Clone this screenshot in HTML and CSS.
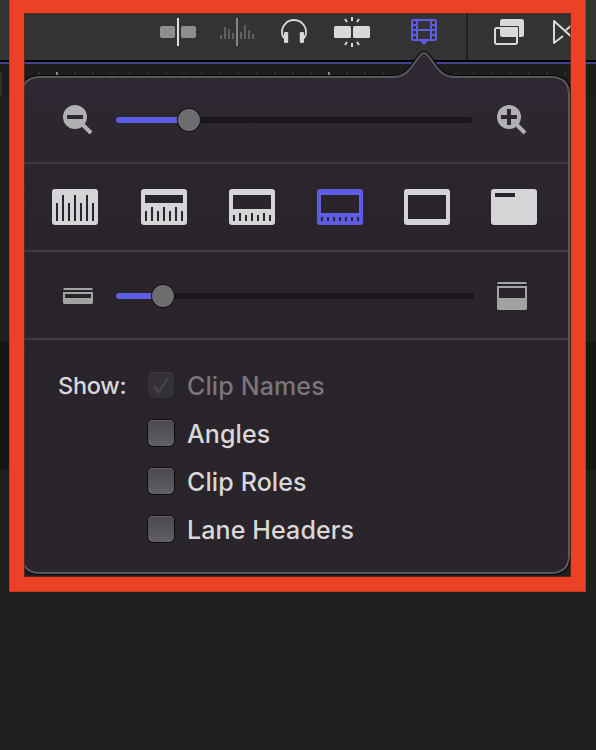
FILE: index.html
```html
<!DOCTYPE html>
<html lang="en">
<head>
<meta charset="utf-8">
<title>Clip Appearance</title>
<link rel="stylesheet" href="styles.css">
</head>
<body>
<div class="app">
  <header class="toolbar">
    <svg class="tool" width="36" height="32"><g fill="#8e8e8e"><rect y="10" width="15" height="12" rx="2"/><rect x="21" y="10" width="15" height="12" rx="2"/></g><rect x="17" y="2" width="2" height="28" fill="#dedede"/></svg>
    <svg class="tool audio" width="34" height="32" fill="#606060"><path d="M0 19h2v4H0zM4 11h2v12H4zM8 13h2v10H8zM12 17h2v6h-2zM20 16h2v7h-2zM24 9h2v14h-2zM28 14h2v9h-2zM32 18h2v5h-2z"/><rect x="16" y="2" width="2" height="28" fill="#858585"/></svg>
    <svg class="tool phones" width="26" height="32"><path d="M4.500 23C2 21.500 1 18.500 1 16A12 12 0 0 1 25 16C25 18.500 24 21.500 21.500 23" fill="none" stroke="#d9d9d9" stroke-width="1.800"/><rect x="3" y="16" width="4.200" height="11" rx="1.300" fill="#d9d9d9"/><rect x="18.800" y="16" width="4.200" height="11" rx="1.300" fill="#d9d9d9"/></svg>
    <svg class="tool snap" width="36" height="32" fill="#d9d9d9"><rect y="10" width="17" height="12" rx="1.500"/><rect x="19" y="10" width="17" height="12" rx="1.500"/><path d="M17 1h2v4h-2zM17 27h2v4h-2z"/><path d="M11 3l2 3M25 3l-2 3M11 29l2-3M25 29l-2-3" stroke="#d9d9d9" stroke-width="2"/></svg>
    <svg class="tool film" width="26" height="32"><path d="M2 3h22a2 2 0 0 1 2 2v18a2 2 0 0 1-2 2h-7l-4 4-4-4H2a2 2 0 0 1-2-2V5a2 2 0 0 1 2-2z" fill="#5d5ce2"/><path d="M7 5h12v8H7zM7 15h12v8H7zM2 5h3v3H2zM2 10h3v3H2zM2 15h3v3H2zM2 20h3v3H2zM21 5h3v3h-3zM21 10h3v3h-3zM21 15h3v3h-3zM21 20h3v3h-3z" fill="#333"/></svg>
    <span class="divider"></span>
    <svg class="tool" width="30" height="32"><rect x="6" y="3" width="24" height="18" rx="2.500" fill="#d9d9d9"/><rect x="1" y="12" width="22" height="16" rx="2" fill="none" stroke="#d9d9d9" stroke-width="2"/><path d="M5 10.500h19.500V21" fill="none" stroke="#333"/></svg>
    <svg class="tool transition" width="36" height="32"><path d="M10 20L1 27V5l20 18M13 14L19 9" fill="none" stroke="#d9d9d9" stroke-width="2" stroke-linejoin="round"/></svg>
  </header>
  <main class="timeline">
    <svg class="ruler" width="596" height="32" shape-rendering="crispEdges"><path d="M38 9.500h530" stroke="#2c2c2c" stroke-width="3" stroke-dasharray="2 16.130"/><path d="M56 8h2v3h-2zM328 8h2v3h-2z" fill="#858585"/><path d="M0 8h2v24H0z" fill="#303030"/></svg>
    <div class="lane"></div>
  </main>
</div>

<section class="popover">
  <svg class="shape" width="552" height="528" viewBox="20 48 552 528">
    <defs>
      <linearGradient id="panel" x2="0" y2="1"><stop stop-color="#2e2832"/><stop offset=".4" stop-color="#29242b"/><stop offset="1" stop-color="#29252a"/></linearGradient>
      <path id="outline" d="M40 77H392C402 77 406 74 411 67.500L420 55.500Q424 50.500 428 55.500L437 67.500C442 74 446 77 456 77H551Q569 77 569 95V555Q569 573 551 573H40Q22 573 22 555V95Q22 77 40 77Z"/>
    </defs>
    <use href="#outline" fill="none" stroke="#050505" stroke-width="4"/>
    <use href="#outline" fill="url(#panel)" stroke="#5b585d" stroke-width="2"/>
  </svg>
  <div class="content">
    <div class="row zoom">
      <svg width="30" height="32"><circle cx="12" cy="12" r="12" fill="#b0b0b0"/><path d="M19 19l9 9" stroke="#b0b0b0" stroke-width="4"/><path d="M4 12h16" stroke="#2c2730" stroke-width="4"/></svg>
      <div class="slider"><span class="fill"></span><span class="knob"></span></div>
      <svg width="30" height="32"><circle cx="12" cy="12" r="12" fill="#b0b0b0"/><path d="M19 19l9 9" stroke="#b0b0b0" stroke-width="4"/><path d="M4 12h16M12 4v16" stroke="#2c2730" stroke-width="4"/></svg>
    </div>
    <div class="row modes">
      <svg width="46" height="36"><rect width="46" height="36" rx="3"/><path class="hole" d="M4 14h2v18H4zM10 6h2v26h-2zM16 14h2v18h-2zM22 6h2v26h-2zM28 14h2v18h-2zM34 6h2v26h-2zM40 14h2v18h-2z"/></svg>
      <svg width="46" height="36"><rect width="46" height="36" rx="3"/><path class="hole" d="M4 6h38v8H4zM4 22h2v10H4zM10 18h2v14h-2zM16 22h2v10h-2zM22 18h2v14h-2zM28 22h2v10h-2zM34 18h2v14h-2zM40 22h2v10h-2z"/></svg>
      <svg width="46" height="36"><rect width="46" height="36" rx="3"/><path class="hole" d="M4 6h38v14H4zM4 26h2v6H4zM10 24h2v8h-2zM16 26h2v6h-2zM22 24h2v8h-2zM28 26h2v6h-2zM34 24h2v8h-2zM40 26h2v6h-2z"/></svg>
      <svg class="active" width="46" height="36"><rect width="46" height="36" rx="3"/><path class="hole" d="M4 6h38v18H4zM4 28h2v4H4zM10 28h2v4h-2zM16 28h2v4h-2zM22 28h2v4h-2zM28 28h2v4h-2zM34 28h2v4h-2zM40 28h2v4h-2z"/></svg>
      <svg width="46" height="36"><rect width="46" height="36" rx="3"/><path class="hole" d="M4 6h38v24H4z"/></svg>
      <svg width="46" height="36"><rect width="46" height="36" rx="3"/><path class="hole" d="M4 4h20v4H4z"/></svg>
    </div>
    <div class="row height">
      <svg width="30" height="16" fill="#a3a3a3"><path d="M1 0h28l1 2H0zM0 4v11l1 1h28l1-1V4zM2 6h26v4H2z" fill-rule="evenodd"/></svg>
      <div class="slider"><span class="fill"></span><span class="knob"></span></div>
      <svg width="30" height="28" fill="#a3a3a3"><path d="M1 0h28l1 2H0zM0 4v23l1 1h28l1-1V4zM2 6h26v10H2z" fill-rule="evenodd"/></svg>
    </div>
    <div class="show">
      <span class="show-label">Show:</span>
      <div class="options">
        <div class="option disabled"><span class="box"><svg width="26" height="26"><path d="M6 14l5 6 9-14" fill="none" stroke="#4b474e" stroke-width="2"/></svg></span><span class="name">Clip Names</span></div>
        <div class="option"><span class="box"></span><span class="name">Angles</span></div>
        <div class="option"><span class="box"></span><span class="name">Clip Roles</span></div>
        <div class="option"><span class="box"></span><span class="name">Lane Headers</span></div>
      </div>
    </div>
  </div>
</section>
<div class="frame"></div>
</body>
</html>
```
FILE: styles.css
```css
* { box-sizing: border-box; }
body {
  margin: 0;
  width: 596px;
  height: 750px;
  position: relative;
  overflow: hidden;
  background: #1f1f1f;
  font-family: Inter, "Liberation Sans", sans-serif;
}
svg { display: block; flex: none; }

.toolbar {
  display: flex;
  height: 64px;
  padding-left: 160px;
  background: #333;
  border-bottom: 2px solid #43428c;
  box-shadow: inset 0 -2px #000;
  overflow: hidden;
}
.tool { margin-top: 16px; }
.audio { margin-left: 24px; }
.phones, .snap { margin-left: 27px; }
.film { margin-left: 41px; }
.divider { flex: none; width: 2px; height: 60px; margin: 0 26px 0 29px; background: #202020; }
.transition { margin-left: 29px; }

.timeline { height: 686px; }
.ruler { background: #1d1d1d; }
.lane { height: 128px; margin-top: 246px; background: #161616; }

.popover { position: absolute; left: 20px; top: 48px; width: 552px; height: 528px; }
.shape { position: absolute; inset: 0; }
.content { position: relative; padding: 30px 4px 0 3px; }
.row { display: flex; border-bottom: 2px solid #3e3b40; }
.zoom { height: 86px; padding: 27px 0 0 40px; }
.modes { height: 88px; padding: 25px 9px 0 29px; fill: #d5d4d6; }
.modes svg { margin-right: 42px; }
.modes svg:nth-child(1) { margin-right: 43px; }
.modes svg:nth-child(4), .modes svg:nth-child(5) { margin-right: 41px; }
.modes .active { fill: #5d5ce2; }
.modes .hole { fill: #2a252c; }
.height { height: 88px; align-items: center; padding: 2px 0 0 40px; }

.slider {
  display: flex;
  align-items: center;
  width: 356px;
  height: 6px;
  margin: 12px 25px 0 23px;
  border-radius: 3px;
  background: #18161a;
}
.height .slider { width: 358px; margin: 0 23px; }
.fill { width: 62px; height: 6px; border-radius: 3px 0 0 3px; background: #5d5ce2; }
.height .fill { width: 36px; }
.knob {
  flex: none;
  width: 22px;
  height: 22px;
  border-radius: 50%;
  background: #6e6e6e;
  box-shadow: 0 0 1px 1px #151316;
}

.show { display: flex; padding: 22px 0 0 35px; color: #d8d7d9; font-weight: 500; }
.show-label { width: 90px; font-size: 23.5px; line-height: 48px; letter-spacing: -.25px; }
.option { display: flex; align-items: center; height: 48px; }
.box {
  width: 26px;
  height: 26px;
  margin: -2px 13px 0 0;
  border-radius: 5px;
  background: linear-gradient(#4b484d, #636065);
  box-shadow: 0 0 0 1px #0b0a0c, inset 0 1px #68656a;
}
.name { font-size: 25px; line-height: 48px; letter-spacing: .12px; white-space: nowrap; }
.disabled { color: #79767b; }
.disabled .box { background: #343038; box-shadow: 0 0 0 1px #252127, inset 0 1px #3f3b42; }

.frame {
  position: absolute;
  left: 9px;
  top: -2px;
  width: 577px;
  height: 594px;
  border: 15px solid #eb4127;
  outline: 1px solid rgba(110, 30, 15, .3);
  outline-offset: -1px;
  box-shadow: inset 0 0 0 1px rgba(120, 35, 20, .7);
}
```
